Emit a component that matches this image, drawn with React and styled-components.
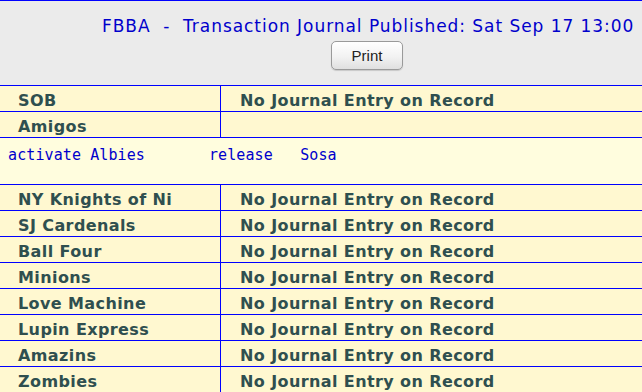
import React from 'react';
import styled, { createGlobalStyle } from 'styled-components';

const GlobalStyle = createGlobalStyle`
  html, body {
    margin: 0;
    padding: 0;
    background: #fff8d0;
    overflow: hidden;
  }
  body {
    font-family: "DejaVu Sans", Verdana, sans-serif;
  }
`;

const teams = [
    { name: 'SOB', entry: 'No Journal Entry on Record' },
    { name: 'Amigos', entry: '', moves: 'activate Albies       release   Sosa' },
    { name: 'NY Knights of Ni', entry: 'No Journal Entry on Record' },
    { name: 'SJ Cardenals', entry: 'No Journal Entry on Record' },
    { name: 'Ball Four', entry: 'No Journal Entry on Record' },
    { name: 'Minions', entry: 'No Journal Entry on Record' },
    { name: 'Love Machine', entry: 'No Journal Entry on Record' },
    { name: 'Lupin Express', entry: 'No Journal Entry on Record' },
    { name: 'Amazins', entry: 'No Journal Entry on Record' },
    { name: 'Zombies', entry: 'No Journal Entry on Record' },
];

const App = () => {
    return (
        <>
            <GlobalStyle />
            <Header>
                <Title>FBBA&nbsp; - &nbsp;Transaction Journal Published: Sat Sep 17 13:00</Title>
                <ButtonRow>
                    <PrintButton>Print</PrintButton>
                </ButtonRow>
            </Header>
            <Journal>
                {teams.map((team) => (
                    <React.Fragment key={team.name}>
                        <Row>
                            <TeamCell>{team.name}</TeamCell>
                            <EntryCell>{team.entry}</EntryCell>
                        </Row>
                        {team.moves && <Moves>{team.moves}</Moves>}
                    </React.Fragment>
                ))}
            </Journal>
        </>
    );
};

export default App;

const Header = styled.div`
    background-color: #ebebeb;
    border-top: 1px solid #0000ff;
    height: 85px;
    box-sizing: border-box;
    padding-top: 15px;
`;

const Title = styled.div`
    padding-left: 102px;
    white-space: nowrap;
    font-size: 17px;
    letter-spacing: 0.95px;
    line-height: 20px;
    color: #0000cc;
`;

const ButtonRow = styled.div`
    padding-left: 331px;
    padding-top: 5px;
`;

const PrintButton = styled.button`
    width: 72px;
    height: 29px;
    border: 1px solid #9a9a9a;
    border-radius: 5px;
    background: linear-gradient(#ffffff, #f2f2f2 55%, #e0e0e0);
    box-shadow: 0 1px 1px rgba(0, 0, 0, 0.15);
    font-family: "Liberation Sans", Arial, sans-serif;
    font-size: 15px;
    color: #222;
    padding: 0;
`;

const Journal = styled.div`
    border-top: 1px solid #0000ff;
    background-color: #fff8d0;
`;

const Row = styled.div`
    display: grid;
    grid-template-columns: 221px 1fr;
    height: 26px;
    box-sizing: border-box;
    border-bottom: 1px solid #0000ff;
    font-size: 16px;
    letter-spacing: 0.4px;
    font-weight: bold;
    color: #2f4f4f;
`;

const TeamCell = styled.div`
    border-right: 1px solid #0000ff;
    padding: 5px 0 0 18px;
    line-height: 20px;
    white-space: nowrap;
`;

const EntryCell = styled.div`
    padding: 5px 0 0 19px;
    line-height: 20px;
    white-space: nowrap;
`;

const Moves = styled.div`
    height: 47px;
    box-sizing: border-box;
    border-bottom: 1px solid #0000ff;
    background-color: #fffdde;
    padding: 8px 0 0 8px;
    font-family: "DejaVu Sans Mono", "Liberation Mono", monospace;
    font-size: 15px;
    letter-spacing: 0.1px;
    line-height: 18px;
    color: #0000cc;
    white-space: pre;
`;
